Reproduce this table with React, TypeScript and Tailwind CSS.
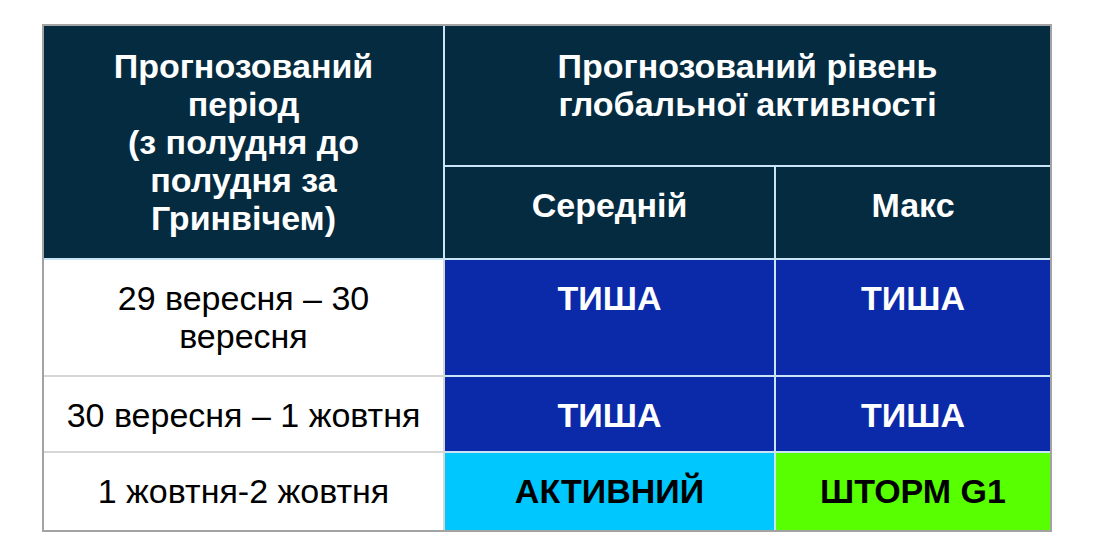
import React from "react";

const font = { fontFamily: '"Liberation Sans", Arial, sans-serif' };

export default function App() {
  const head = "bg-[#042b3f] text-white font-bold align-top text-center border-2 border-[#c9e4f4]";
  const plain = "bg-white text-black align-top text-center border-2 border-[#d6d6d6] pt-[19px]";
  const quiet = "bg-[#0a2aa9] text-white font-bold align-top text-center border-2 border-[#c9e4f4] pt-[19px]";

  return (
    <div className="w-[1096px] h-[554px] bg-white pt-[24px] pl-[42px]" style={font}>
      <div className="w-[1010px] border-2 border-[#a3a3a3]">
        <table className="w-full border-collapse border-hidden text-[34px] leading-[38px] table-fixed">
          <colgroup>
            <col className="w-[400px]" />
            <col className="w-[331px]" />
            <col />
          </colgroup>
          <tbody>
            <tr className="h-[140px]">
              <td rowSpan={2} className={`${head} pt-[21px]`}>
                Прогнозований
                <br />
                період
                <br />
                (з полудня до
                <br />
                полудня за
                <br />
                Гринвічем)
              </td>
              <td colSpan={2} className={`${head} pt-[21px]`}>
                Прогнозований рівень
                <br />
                глобальної активності
              </td>
            </tr>
            <tr className="h-[93px]">
              <td className={`${head} pt-[19px]`}>Середній</td>
              <td className={`${head} pt-[19px]`}>Макс</td>
            </tr>
            <tr className="h-[117px]">
              <td className={plain}>
                29 вересня – 30
                <br />
                вересня
              </td>
              <td className={quiet}>ТИША</td>
              <td className={quiet}>ТИША</td>
            </tr>
            <tr className="h-[76px]">
              <td className={plain}>30 вересня – 1 жовтня</td>
              <td className={quiet}>ТИША</td>
              <td className={quiet}>ТИША</td>
            </tr>
            <tr className="h-[78px]">
              <td className={plain}>1 жовтня-2 жовтня</td>
              <td className="bg-[#00c8fe] text-black font-bold align-top text-center border-2 border-[#c9e4f4] pt-[19px]">
                АКТИВНИЙ
              </td>
              <td className="bg-[#57ff00] text-black font-bold align-top text-center border-2 border-[#c9e4f4] pt-[19px]">
                ШТОРМ G1
              </td>
            </tr>
          </tbody>
        </table>
      </div>
    </div>
  );
}
